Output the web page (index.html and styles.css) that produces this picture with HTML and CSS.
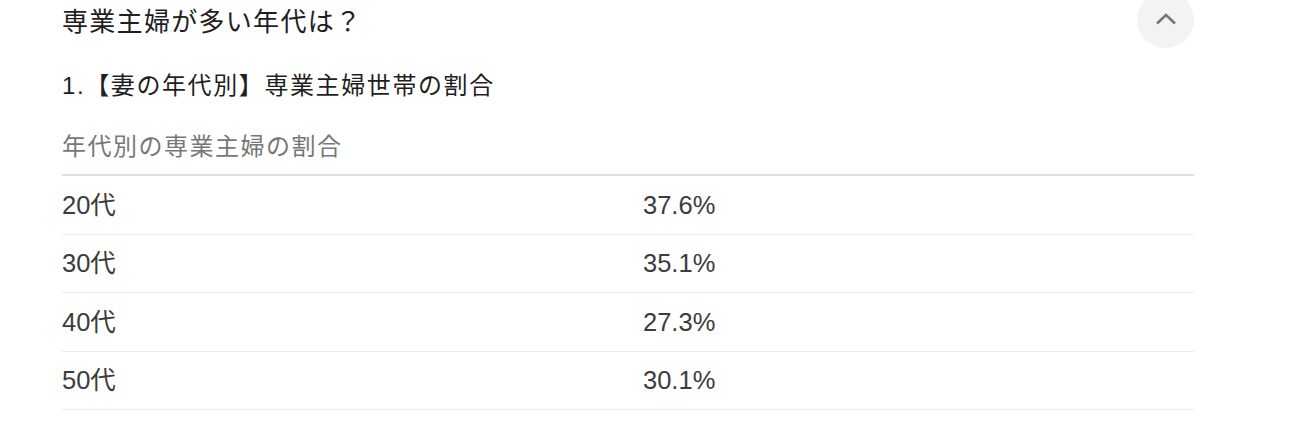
FILE: index.html
```html
<!DOCTYPE html>
<html lang="ja">
<head>
<meta charset="utf-8">
<link rel="stylesheet" href="styles.css">
</head>
<body>
<div class="panel">
  <div class="question">
    <div class="q-text">専業主婦が多い年代は？</div>
    <div class="toggle">
      <svg width="22" height="12" viewBox="0 0 22 12"><path d="M2 10.5 L11 2 L20 10.5" fill="none" stroke="#767676" stroke-width="2.6"/></svg>
    </div>
  </div>
  <div class="subhead">1.【妻の年代別】専業主婦世帯の割合</div>
  <div class="caption">年代別の専業主婦の割合</div>
  <div class="table">
    <div class="row"><div class="cell">20代</div><div class="cell">37.6%</div></div>
    <div class="row"><div class="cell">30代</div><div class="cell">35.1%</div></div>
    <div class="row"><div class="cell">40代</div><div class="cell">27.3%</div></div>
    <div class="row"><div class="cell">50代</div><div class="cell">30.1%</div></div>
  </div>
</div>
</body>
</html>
```
FILE: styles.css
```css
html, body {
  margin: 0;
  padding: 0;
  background: #fff;
}
body {
  font-family: "Liberation Sans", "Noto Sans CJK JP", sans-serif;
  overflow: hidden;
}
.panel {
  width: 1132px;
  margin-left: 62px;
  display: flex;
  flex-direction: column;
}
.question {
  display: flex;
  align-items: center;
  justify-content: space-between;
  height: 56px;
  margin-top: -9px;
}
.q-text {
  font-size: 26px;
  color: #1f1f1f;
  letter-spacing: 1.3px;
}
.toggle {
  width: 57px;
  height: 57px;
  border-radius: 50%;
  background: #f3f3f3;
  display: flex;
  align-items: center;
  justify-content: center;
}
.subhead {
  font-size: 24px;
  color: #1f1f1f;
  margin-top: 23px;
  line-height: 32px;
  letter-spacing: 1.6px;
}
.caption {
  font-size: 24px;
  color: #777;
  margin-top: 28px;
  line-height: 34px;
  letter-spacing: 1.5px;
  padding-bottom: 10px;
  border-bottom: 2px solid #dedede;
}
.table {
  display: flex;
  flex-direction: column;
}
.row {
  display: grid;
  grid-template-columns: 581px 1fr;
  height: 57.5px;
  align-items: center;
  border-bottom: 1px solid #ebebeb;
  font-size: 25.5px;
  color: #3c3c3c;
}
.cell {
  line-height: 30px;
}
```
